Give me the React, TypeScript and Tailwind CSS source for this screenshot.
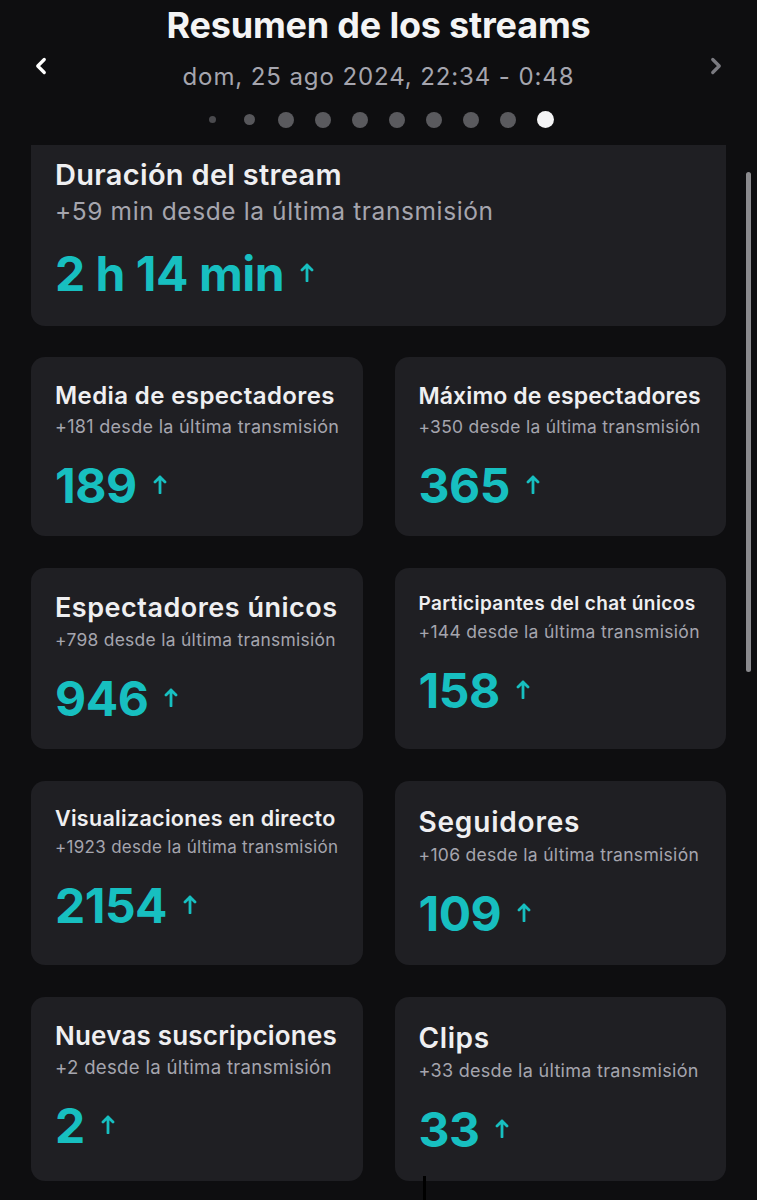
import { ChevronLeft, ChevronRight } from "lucide-react";

type Stat = {
  title: string;
  titleClass: string;
  delta: string;
  deltaClass: string;
  value: string;
  height: string;
};

const stats: Stat[] = [
  { title: "Media de espectadores", titleClass: "text-[24px] leading-[30px] tracking-[0.4px]", delta: "+181", deltaClass: "text-[18px]", value: "189", height: "h-[179px]" },
  { title: "Máximo de espectadores", titleClass: "text-[23px] leading-[30px] tracking-[0.1px]", delta: "+350", deltaClass: "text-[17.4px]", value: "365", height: "h-[179px]" },
  { title: "Espectadores únicos", titleClass: "text-[27px] leading-[32px] tracking-[0.5px]", delta: "+798", deltaClass: "text-[17.4px]", value: "946", height: "h-[181px]" },
  { title: "Participantes del chat únicos", titleClass: "text-[19px] leading-[24px] tracking-[0.4px]", delta: "+144", deltaClass: "text-[17.5px]", value: "158", height: "h-[181px]" },
  { title: "Visualizaciones en directo", titleClass: "text-[21.5px] leading-[26px] tracking-[0.3px]", delta: "+1923", deltaClass: "text-[17px]", value: "2154", height: "h-[184px]" },
  { title: "Seguidores", titleClass: "text-[28px] leading-[34px] tracking-[0.8px]", delta: "+106", deltaClass: "text-[17.5px]", value: "109", height: "h-[184px]" },
  { title: "Nuevas suscripciones", titleClass: "text-[26px] leading-[30px] tracking-[0.2px]", delta: "+2", deltaClass: "text-[18.6px]", value: "2", height: "h-[184px]" },
  { title: "Clips", titleClass: "text-[28px] leading-[34px] tracking-[0.6px]", delta: "+33", deltaClass: "text-[18px]", value: "33", height: "h-[184px]" },
];

// pager dots, each sits in a fixed 37px slot
const dots = ["w-[7px] h-[7px] bg-[#4a4a4e]", "w-[11px] h-[11px] bg-[#57575b]", "w-4 h-4 bg-[#5a5a5e]", "w-4 h-4 bg-[#5a5a5e]", "w-4 h-4 bg-[#5a5a5e]", "w-4 h-4 bg-[#5a5a5e]", "w-4 h-4 bg-[#5a5a5e]", "w-4 h-4 bg-[#5a5a5e]", "w-4 h-4 bg-[#5a5a5e]", "w-[17px] h-[17px] bg-[#f4f4f5]"];

function UpArrow() {
  return (
    <svg width="14" height="20" viewBox="0 0 14 20" fill="none" className="ml-[16px] mb-[4px]">
      <path d="M7 19V3M2 8l5-5 5 5" stroke="#17bfc0" strokeWidth="2.8" strokeLinecap="round" strokeLinejoin="round" />
    </svg>
  );
}

function Value({ value }: { value: string }) {
  return (
    <div className="flex items-center text-[48px] leading-[56px] font-bold tracking-[-0.5px] text-[#17bfc0]">
      <span>{value}</span>
      <UpArrow />
    </div>
  );
}

function StatCard({ stat }: { stat: Stat }) {
  return (
    <div className={`${stat.height} rounded-[14px] bg-[#1f1f23] px-6 pt-6`}>
      <h3 className={`${stat.titleClass} font-semibold text-[#efeff1] whitespace-nowrap`}>{stat.title}</h3>
      <p className={`${stat.deltaClass} mt-[5px] leading-[22px] tracking-[0.3px] text-[#a5a5ae] whitespace-nowrap`}>
        {stat.delta} desde la última transmisión
      </p>
      <div className="mt-5">
        <Value value={stat.value} />
      </div>
    </div>
  );
}

export default function App() {
  return (
    <div
      className="relative w-[757px] h-[1200px] overflow-hidden bg-[#0e0e10] text-[#efeff1]"
      style={{ fontFamily: "Inter, 'Noto Sans', sans-serif" }}
    >
      {/* Header with pager */}
      <header className="h-[145px] flex items-start justify-between px-[28px]">
        <ChevronLeft className="mt-[53px] w-[26px] h-[26px] text-white" strokeWidth={3} />
        <div className="flex flex-col items-center">
          <h1 className="mt-[4px] text-[36px] leading-[42px] font-bold tracking-[-0.2px] text-[#f4f4f5]">
            Resumen de los streams
          </h1>
          <p className="mt-[17px] text-[24px] leading-[28px] text-[#a5a5ae] tracking-[0.9px]">
            dom, 25 ago 2024, 22:34 - 0:48
          </p>
          <div className="mt-[20px] flex items-center h-[17px]">
            {dots.map((d, i) => (
              <span key={i} className="w-[37px] flex justify-center">
                <span className={`${d} rounded-full`} />
              </span>
            ))}
          </div>
        </div>
        <ChevronRight className="mt-[53px] w-[26px] h-[26px] text-[#7a7a80]" strokeWidth={3} />
      </header>

      <main className="px-[31px]">
        {/* Stream duration, top of card scrolled under header */}
        <div className="h-[181px] rounded-b-[14px] bg-[#1f1f23] px-6 pt-[13px]">
          <h2 className="text-[29px] leading-[34px] tracking-[0.3px] font-semibold text-[#efeff1]">Duración del stream</h2>
          <p className="mt-[5px] text-[24.5px] leading-[29px] tracking-[0.6px] text-[#a5a5ae]">
            +59 min desde la última transmisión
          </p>
          <div className="mt-[20px]">
            <Value value="2 h 14 min" />
          </div>
        </div>

        <div className="mt-[31px] grid grid-cols-2 gap-x-[32px] gap-y-[32px]">
          {stats.map((s) => (
            <StatCard key={s.title} stat={s} />
          ))}
        </div>
      </main>

      {/* Scrollbar */}
      <div className="absolute right-[6px] top-[172px] w-[5px] h-[500px] rounded-full bg-[#8a8a8e]" />
      {/* Cursor line */}
      <div className="absolute left-[423px] top-[1176px] w-[3px] h-[24px] bg-black" />
    </div>
  );
}
